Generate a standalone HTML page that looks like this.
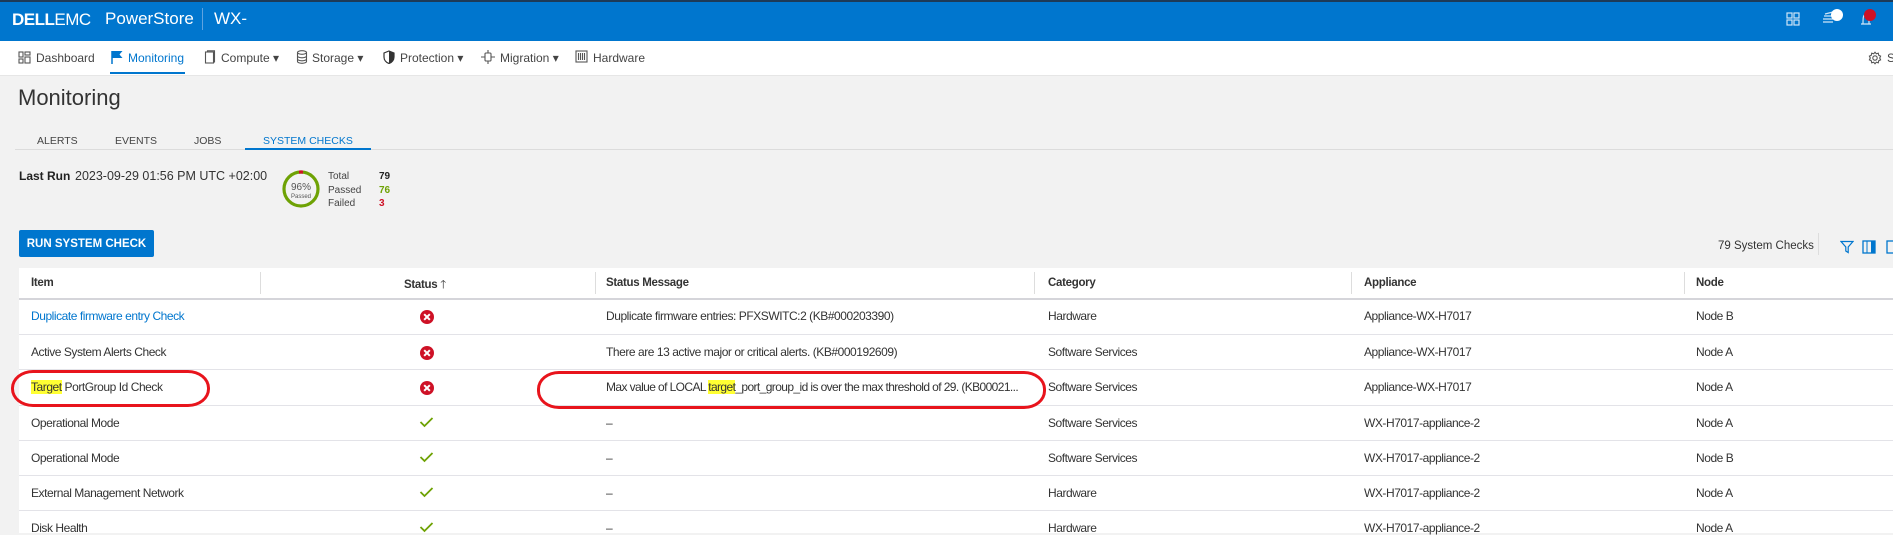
<!DOCTYPE html>
<html><head><meta charset="utf-8"><style>
*{margin:0;padding:0;box-sizing:border-box}
body{width:1893px;height:533px;overflow:hidden;background:#f2f2f2;font-family:"Liberation Sans",sans-serif;color:#333;position:relative}
.a{position:absolute;white-space:nowrap}
.top{left:0;top:0;width:1893px;height:41px;background:#0076ce;border-top:2px solid #1d3a57}
.nav{left:0;top:41px;width:1893px;height:34px;background:#fff}
.ni{font-size:12px;color:#444;top:51px}
.tab{font-size:10.5px;color:#444;top:135px}
.tb{left:19px;top:268px;width:1874px;height:265px;background:#fff}
.th{font-size:11.5px;font-weight:bold;color:#333;top:277px;letter-spacing:-0.3px}
.sep{position:absolute;top:272px;width:1px;height:22px;background:#ddd}
.rl{position:absolute;left:19px;width:1874px;height:1px;background:#e3e3e8}
.td{font-size:12px;color:#333;letter-spacing:-0.45px}
.hl{background:#ffff33}
.err{position:absolute;width:14px;height:14px;border-radius:50%;background:#ce1126}
.err:before,.err:after{content:"";position:absolute;left:6px;top:3px;width:2px;height:8px;background:#fff;transform:rotate(45deg)}
.err:after{transform:rotate(-45deg)}
.oval{position:absolute;border:3.5px solid #e8141c;border-radius:22px/18px}
</style></head><body>
<div class="a top"></div>
<div class="a" style="left:12px;top:10px;font-size:17px;color:#fff;font-weight:bold;letter-spacing:-0.5px">DELL<span style="font-weight:normal">EMC</span></div>
<div class="a" style="left:105px;top:9px;font-size:17px;color:#fff">PowerStore</div>
<div class="a" style="left:202px;top:8px;width:1px;height:22px;background:#5fa3e0"></div>
<div class="a" style="left:214px;top:9px;font-size:17px;color:#fff">WX-</div>
<svg class="a" style="left:1786px;top:12px" width="14" height="14" viewBox="0 0 14 14" fill="none" stroke="#cfe5f7" stroke-width="1.2"><rect x="1" y="1" width="5" height="5"/><rect x="8" y="1" width="5" height="5"/><rect x="1" y="8" width="5" height="5"/><rect x="8" y="8" width="5" height="5"/></svg>
<svg class="a" style="left:1821px;top:8px" width="26" height="20" viewBox="0 0 26 20" fill="none" stroke="#cfe5f7" stroke-width="1.2"><path d="M3 8h10M2 11h10M2 14h10M4 6l8-2"/><circle cx="16" cy="7" r="6" fill="#fff" stroke="none"/></svg>
<svg class="a" style="left:1856px;top:8px" width="26" height="20" viewBox="0 0 26 20" fill="none" stroke="#cfe5f7" stroke-width="1.2"><path d="M5 16h10M7 16c0-6 0-9 3-10 3 1 3 4 3 10"/><circle cx="14" cy="7" r="6" fill="#ce1126" stroke="none"/></svg>
<div class="a nav"></div>
<div class="a" style="left:0;top:75px;width:1893px;height:1px;background:#e6e6e6"></div>
<svg class="a" style="left:18px;top:51px" width="13" height="13" viewBox="0 0 13 13" fill="none" stroke="#555" stroke-width="1.1"><rect x="1" y="1" width="4" height="5"/><rect x="7" y="1" width="5" height="3"/><rect x="1" y="8" width="4" height="4"/><rect x="7" y="6" width="5" height="6"/></svg>
<div class="a ni" style="left:36px">Dashboard</div>
<svg class="a" style="left:111px;top:50px" width="13" height="14" viewBox="0 0 13 14"><path d="M1 1v13" stroke="#0076ce" stroke-width="1.5"/><path d="M1.5 1h10l-3 3.5 3 3.5h-10z" fill="#0076ce"/></svg>
<div class="a ni" style="left:128px;color:#0076ce">Monitoring</div>
<div class="a" style="left:110px;top:72px;width:75px;height:2px;background:#0076ce"></div>
<svg class="a" style="left:204px;top:50px" width="12" height="14" viewBox="0 0 12 14" fill="none" stroke="#555" stroke-width="1.1"><rect x="1.5" y="2" width="8" height="11"/><path d="M3.5 2V0.8h7V12h-1"/></svg>
<div class="a ni" style="left:221px">Compute ▾</div>
<svg class="a" style="left:296px;top:50px" width="12" height="14" viewBox="0 0 12 14" fill="none" stroke="#555" stroke-width="1.1"><ellipse cx="6" cy="2.5" rx="4.5" ry="1.8"/><path d="M1.5 2.5v9c0 1 2 1.8 4.5 1.8s4.5-.8 4.5-1.8v-9M1.5 6c0 1 2 1.8 4.5 1.8S10.5 7 10.5 6M1.5 9c0 1 2 1.8 4.5 1.8S10.5 10 10.5 9"/></svg>
<div class="a ni" style="left:312px">Storage ▾</div>
<svg class="a" style="left:383px;top:50px" width="12" height="14" viewBox="0 0 12 14"><path d="M6 1l5 2v4c0 3-2 5.5-5 6.5C3 12.5 1 10 1 7V3z" fill="none" stroke="#333" stroke-width="1.2"/><path d="M6 1l5 2v4c0 3-2 5.5-5 6.5z" fill="#333"/></svg>
<div class="a ni" style="left:400px">Protection ▾</div>
<svg class="a" style="left:481px;top:50px" width="14" height="14" viewBox="0 0 14 14" fill="none" stroke="#555" stroke-width="1.1"><rect x="4" y="3" width="6" height="8" rx="1"/><path d="M0 7h4M10 7h4M7 0v3M7 11v3"/></svg>
<div class="a ni" style="left:500px">Migration ▾</div>
<svg class="a" style="left:575px;top:50px" width="13" height="13" viewBox="0 0 13 13" fill="none" stroke="#555" stroke-width="1.1"><rect x="1" y="1" width="11" height="11"/><path d="M3.5 3v7M5.5 3v7M7.5 3v7M9.5 3v7"/></svg>
<div class="a ni" style="left:593px">Hardware</div>
<svg class="a" style="left:1868px;top:51px" width="14" height="14" viewBox="0 0 14 14" fill="none" stroke="#555" stroke-width="1.1"><circle cx="7" cy="7" r="2.2"/><path d="M7 1.2l1.3 1.6 2-.6.4 2 1.9.9-.9 1.9.9 1.9-1.9.9-.4 2-2-.6L7 12.8l-1.3-1.6-2 .6-.4-2-1.9-.9.9-1.9-.9-1.9 1.9-.9.4-2 2 .6z"/></svg>
<div class="a ni" style="left:1887px">S</div>
<div class="a" style="left:18px;top:85px;font-size:22px;color:#333">Monitoring</div>
<div class="a tab" style="left:37px">ALERTS</div>
<div class="a tab" style="left:115px">EVENTS</div>
<div class="a tab" style="left:194px">JOBS</div>
<div class="a tab" style="left:263px;color:#0076ce">SYSTEM CHECKS</div>
<div class="a" style="left:15px;top:149px;width:1878px;height:1px;background:#dcdcdc"></div>
<div class="a" style="left:245px;top:148px;width:126px;height:2px;background:#0076ce"></div>
<div class="a" style="left:19px;top:169px;font-size:12px;font-weight:bold;color:#222">Last Run</div>
<div class="a" style="left:75px;top:169px;font-size:12.5px;color:#333">2023-09-29 01:56 PM UTC +02:00</div>
<svg class="a" style="left:281px;top:169px" width="40" height="40" viewBox="0 0 40 40"><circle cx="20" cy="20" r="17" fill="none" stroke="#6ea204" stroke-width="3.2"/><path d="M18 3.1A17 17 0 0 1 22 3.1" stroke="#ce1126" stroke-width="3.2" fill="none"/><text x="20" y="21" font-size="10" text-anchor="middle" fill="#555" font-family="Liberation Sans">96%</text><text x="20" y="29" font-size="6" text-anchor="middle" fill="#555" font-family="Liberation Sans">Passed</text></svg>
<div class="a" style="left:328px;top:170px;font-size:10px;color:#444;line-height:13.5px">Total<br>Passed<br>Failed</div>
<div class="a" style="left:379px;top:170px;font-size:10px;font-weight:bold;line-height:13.5px"><span style="color:#222">79</span><br><span style="color:#6ea204">76</span><br><span style="color:#ce1126">3</span></div>
<div class="a" style="left:19px;top:230px;width:135px;height:27px;background:#0076ce;border-radius:2px;color:#fff;font-size:11.5px;font-weight:bold;display:flex;align-items:center;justify-content:center">RUN SYSTEM CHECK</div>
<div class="a" style="left:1718px;top:240px;font-size:11.5px;color:#333">79 System Checks</div>
<div class="a" style="left:1818px;top:233px;width:1px;height:22px;background:#ddd"></div>
<svg class="a" style="left:1840px;top:240px" width="14" height="14" viewBox="0 0 14 14" fill="none" stroke="#0076ce" stroke-width="1.2"><path d="M1 1.5h12L8.2 7v5.5L5.8 11V7z"/></svg>
<svg class="a" style="left:1862px;top:240px" width="14" height="14" viewBox="0 0 14 14"><rect x="1" y="1" width="12" height="12" fill="none" stroke="#0076ce" stroke-width="1.3"/><path d="M5 1v12" stroke="#0076ce"/><rect x="9" y="1" width="4" height="12" fill="#0076ce"/></svg>
<svg class="a" style="left:1886px;top:240px" width="7" height="14"><rect x="1" y="1" width="8" height="12" fill="none" stroke="#0076ce" stroke-width="1.3"/></svg>
<div class="a tb"></div>
<div class="a th" style="left:31px">Item</div>
<div class="a th" style="left:404px">Status <span style="font-weight:normal">🡑</span></div>
<div class="a th" style="left:606px">Status Message</div>
<div class="a th" style="left:1048px">Category</div>
<div class="a th" style="left:1364px">Appliance</div>
<div class="a th" style="left:1696px">Node</div>
<div class="sep" style="left:260px"></div><div class="sep" style="left:595px"></div><div class="sep" style="left:1034px"></div><div class="sep" style="left:1351px"></div><div class="sep" style="left:1684px"></div>
<div class="rl" style="top:298px;height:2px;background:#d5d5da"></div>
<div class="rl" style="top:334px"></div><div class="rl" style="top:369px"></div><div class="rl" style="top:405px"></div><div class="rl" style="top:440px"></div><div class="rl" style="top:475px"></div><div class="rl" style="top:510px"></div>

<div class="a td" style="left:31px;top:309px;color:#0076ce">Duplicate firmware entry Check</div>
<div class="err" style="left:420px;top:310px"></div>
<div class="a td" style="left:606px;top:309px">Duplicate firmware entries: PFXSWITC:2 (KB#000203390)</div>
<div class="a td" style="left:1048px;top:309px">Hardware</div>
<div class="a td" style="left:1364px;top:309px">Appliance-WX-H7017</div>
<div class="a td" style="left:1696px;top:309px">Node B</div>

<div class="a td" style="left:31px;top:345px">Active System Alerts Check</div>
<div class="err" style="left:420px;top:346px"></div>
<div class="a td" style="left:606px;top:345px">There are 13 active major or critical alerts. (KB#000192609)</div>
<div class="a td" style="left:1048px;top:345px">Software Services</div>
<div class="a td" style="left:1364px;top:345px">Appliance-WX-H7017</div>
<div class="a td" style="left:1696px;top:345px">Node A</div>

<div class="a td" style="left:31px;top:380px"><span class="hl">Target</span> PortGroup Id Check</div>
<div class="err" style="left:420px;top:381px"></div>
<div class="a td" style="left:606px;top:380px;letter-spacing:-0.6px">Max value of LOCAL <span class="hl">target</span>_port_group_id is over the max threshold of 29. (KB00021...</div>
<div class="a td" style="left:1048px;top:380px">Software Services</div>
<div class="a td" style="left:1364px;top:380px">Appliance-WX-H7017</div>
<div class="a td" style="left:1696px;top:380px">Node A</div>

<svg class="a" style="left:419px;top:416px" width="15" height="12"><path d="M1.5 6l4 4 8-8" fill="none" stroke="#6ea204" stroke-width="1.8"/></svg>
<div class="a td" style="left:31px;top:416px">Operational Mode</div>
<div class="a td" style="left:606px;top:416px">–</div>
<div class="a td" style="left:1048px;top:416px">Software Services</div>
<div class="a td" style="left:1364px;top:416px">WX-H7017-appliance-2</div>
<div class="a td" style="left:1696px;top:416px">Node A</div>

<svg class="a" style="left:419px;top:451px" width="15" height="12"><path d="M1.5 6l4 4 8-8" fill="none" stroke="#6ea204" stroke-width="1.8"/></svg>
<div class="a td" style="left:31px;top:451px">Operational Mode</div>
<div class="a td" style="left:606px;top:451px">–</div>
<div class="a td" style="left:1048px;top:451px">Software Services</div>
<div class="a td" style="left:1364px;top:451px">WX-H7017-appliance-2</div>
<div class="a td" style="left:1696px;top:451px">Node B</div>

<svg class="a" style="left:419px;top:486px" width="15" height="12"><path d="M1.5 6l4 4 8-8" fill="none" stroke="#6ea204" stroke-width="1.8"/></svg>
<div class="a td" style="left:31px;top:486px">External Management Network</div>
<div class="a td" style="left:606px;top:486px">–</div>
<div class="a td" style="left:1048px;top:486px">Hardware</div>
<div class="a td" style="left:1364px;top:486px">WX-H7017-appliance-2</div>
<div class="a td" style="left:1696px;top:486px">Node A</div>

<svg class="a" style="left:419px;top:521px" width="15" height="12"><path d="M1.5 6l4 4 8-8" fill="none" stroke="#6ea204" stroke-width="1.8"/></svg>
<div class="a td" style="left:31px;top:521px">Disk Health</div>
<div class="a td" style="left:606px;top:521px">–</div>
<div class="a td" style="left:1048px;top:521px">Hardware</div>
<div class="a td" style="left:1364px;top:521px">WX-H7017-appliance-2</div>
<div class="a td" style="left:1696px;top:521px">Node A</div>

<div class="oval" style="left:11px;top:370px;width:199px;height:37px"></div>
<div class="oval" style="left:537px;top:371px;width:509px;height:38px"></div>
</body></html>
